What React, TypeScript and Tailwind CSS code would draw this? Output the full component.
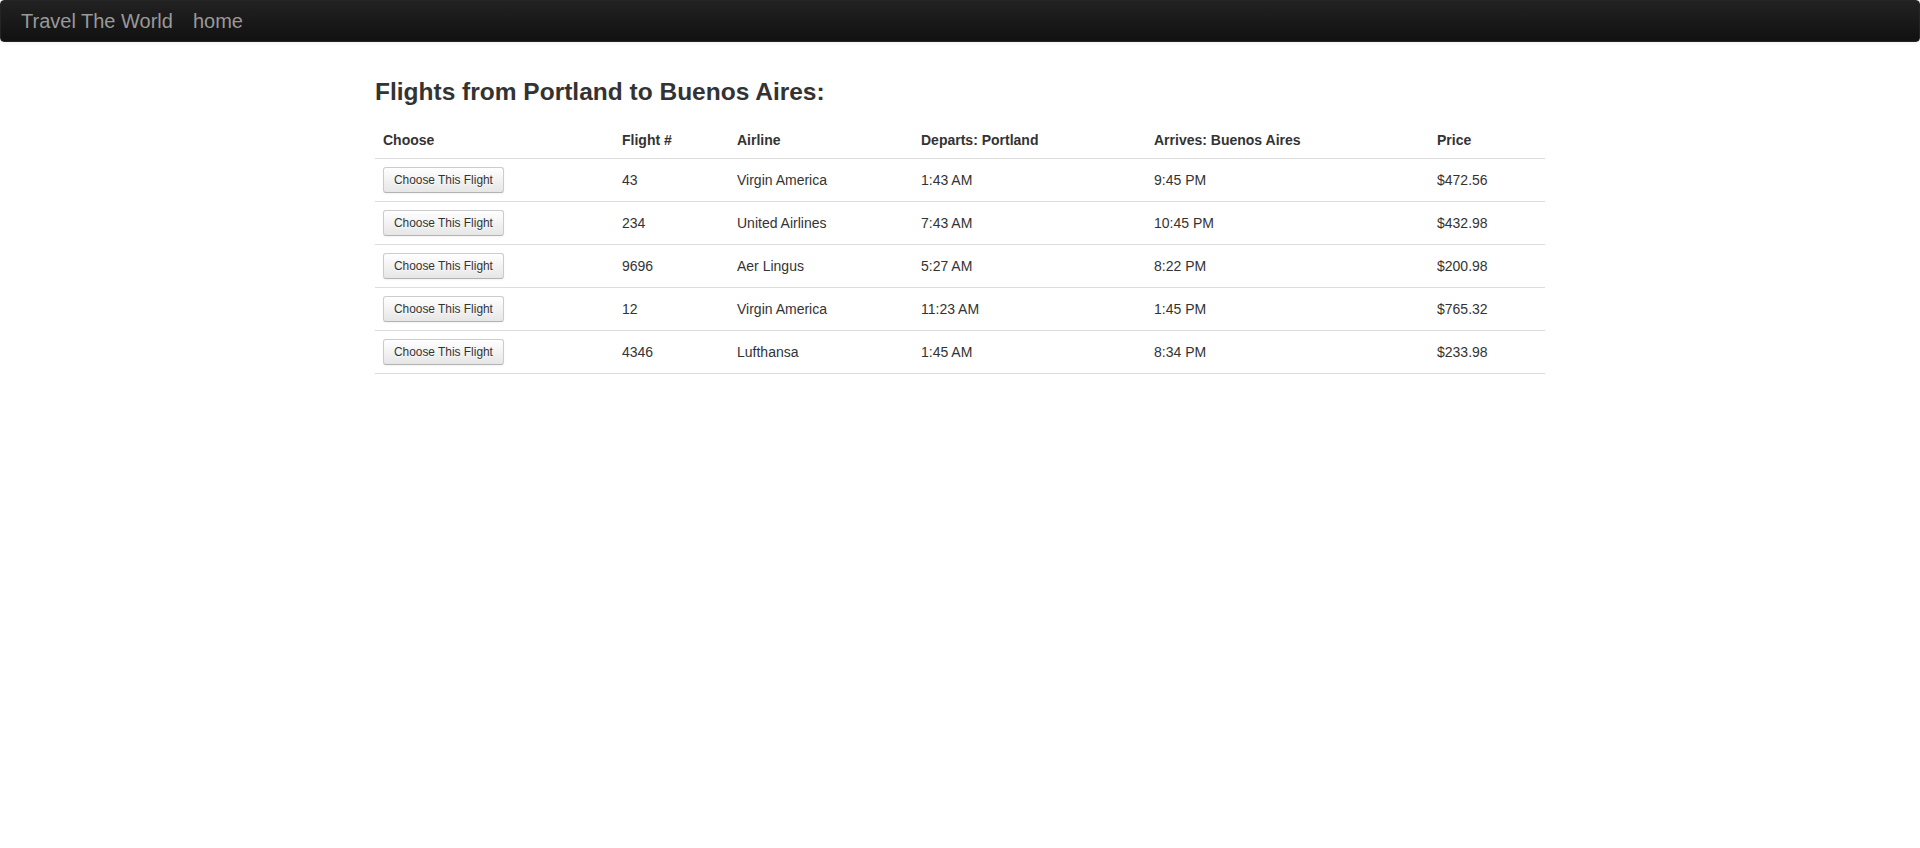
import React from "react";

const flights = [
  { num: "43", airline: "Virgin America", dep: "1:43 AM", arr: "9:45 PM", price: "$472.56" },
  { num: "234", airline: "United Airlines", dep: "7:43 AM", arr: "10:45 PM", price: "$432.98" },
  { num: "9696", airline: "Aer Lingus", dep: "5:27 AM", arr: "8:22 PM", price: "$200.98" },
  { num: "12", airline: "Virgin America", dep: "11:23 AM", arr: "1:45 PM", price: "$765.32" },
  { num: "4346", airline: "Lufthansa", dep: "1:45 AM", arr: "8:34 PM", price: "$233.98" },
];

export default function App() {
  return (
    <div className="min-h-[848px] bg-white text-[14px] leading-[20px] text-[#333]" style={{ fontFamily: '"Liberation Sans", Arial, sans-serif' }}>
      <div className="flex h-[42px] items-center rounded-[4px] border border-[#252525] bg-gradient-to-b from-[#222222] to-[#111111] px-[20px] shadow-[0_1px_4px_rgba(0,0,0,0.065)]">
        <a className="text-[20px] leading-[20px] text-[#999]">Travel The World</a>
        <a className="ml-[20px] text-[20px] leading-[20px] text-[#999]">home</a>
      </div>
      <div className="mx-auto w-[1170px]">
        <h3 className="mb-[10px] mt-[30px] text-[24.5px] font-bold leading-[40px] text-[#333]">Flights from Portland to Buenos Aires:</h3>
        <table className="w-full border-collapse">
          <thead>
            <tr className="text-left">
              <th className="w-[239px] p-[8px] align-bottom font-bold">Choose</th>
              <th className="w-[115px] p-[8px] align-bottom font-bold">Flight #</th>
              <th className="w-[184px] p-[8px] align-bottom font-bold">Airline</th>
              <th className="w-[233px] p-[8px] align-bottom font-bold">Departs: Portland</th>
              <th className="w-[283px] p-[8px] align-bottom font-bold">Arrives: Buenos Aires</th>
              <th className="p-[8px] align-bottom font-bold">Price</th>
            </tr>
          </thead>
          <tbody>
            {flights.map((f, i) => (
              <tr key={i} className="border-t border-[#dddddd] last:border-b">
                <td className="p-[8px] align-top">
                  <button className="h-[26px] rounded-[3px] border border-[#cccccc] border-b-[#b3b3b3] bg-gradient-to-b from-white to-[#e6e6e6] px-[10px] text-[11.9px] leading-[20px] text-[#333] shadow-[inset_0_1px_0_rgba(255,255,255,0.2),0_1px_2px_rgba(0,0,0,0.05)] [text-shadow:0_1px_1px_rgba(255,255,255,0.75)]">
                    Choose This Flight
                  </button>
                </td>
                <td className="p-[8px] align-middle">{f.num}</td>
                <td className="p-[8px] align-middle">{f.airline}</td>
                <td className="p-[8px] align-middle">{f.dep}</td>
                <td className="p-[8px] align-middle">{f.arr}</td>
                <td className="p-[8px] align-middle">{f.price}</td>
              </tr>
            ))}
          </tbody>
        </table>
      </div>
    </div>
  );
}
